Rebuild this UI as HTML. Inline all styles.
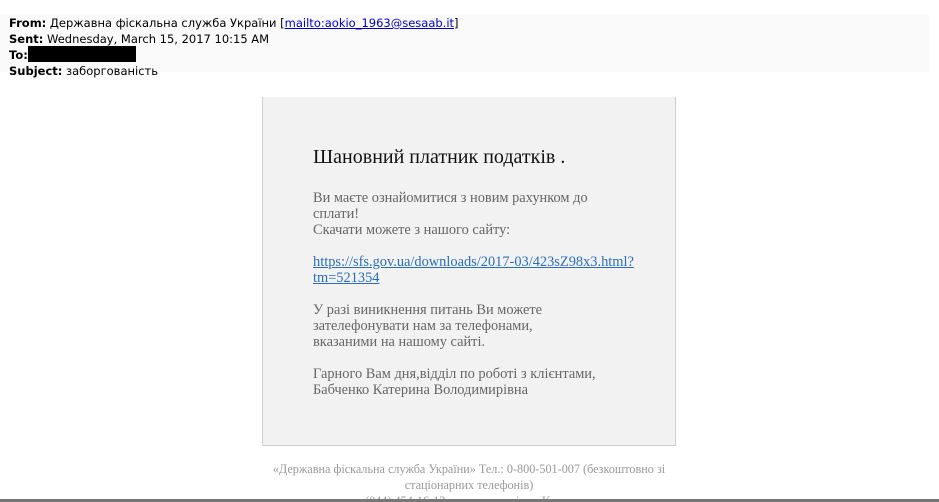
<!DOCTYPE html>
<html><head><meta charset="utf-8"><style>
html,body{margin:0;padding:0;background:#fff;width:939px;height:502px;overflow:hidden;position:relative}
.hdr{position:absolute;left:0;top:14px;width:929px;height:58px;background:#fafafb}
.h{position:absolute;left:9px;font-family:"DejaVu Sans","Liberation Sans",sans-serif;font-size:11.5px;color:#000;line-height:16px;white-space:nowrap}
.h b{font-weight:bold}
.h a{color:#0000cc;text-decoration:underline}
.blk{display:inline-block;width:108px;height:16px;background:#000;vertical-align:top;margin-top:-1px}
.box{position:absolute;left:262px;top:97px;width:412px;height:348px;background:#f2f2f2;border:1px solid #cfcfcf;border-top:none}
.t{position:absolute;left:313px;font-family:"Liberation Serif","DejaVu Serif",serif;font-size:14.4px;color:#666;line-height:16px;white-space:nowrap}
.title{font-size:20px;color:#111;top:149px}
.t a{color:#2a6ebb;text-decoration:underline}
.f{position:absolute;left:262px;width:414px;text-align:center;font-family:"Liberation Serif",serif;font-size:12.2px;color:#999;line-height:16px;top:461px}
.bar{position:absolute;left:0;top:499px;width:939px;height:3px;background:#777}
</style></head><body>
<div class="hdr"></div>
<div class="h" style="top:15px"><b>From:</b> Державна фіскальна служба України [<a>mailto:aokio_1963@sesaab.it</a>]</div>
<div class="h" style="top:31px"><b>Sent:</b> Wednesday, March 15, 2017 10:15 AM</div>
<div class="h" style="top:47px"><b>To:</b><span class="blk"></span></div>
<div class="h" style="top:63px"><b>Subject:</b> заборгованість</div>
<div class="box"></div>
<div class="t title">Шановний платник податків .</div>
<div class="t" style="top:190px">Ви маєте ознайомитися з новим рахунком до<br>сплати!<br>Скачати можете з нашого сайту:</div>
<div class="t" style="top:254px"><a>https://sfs.gov.ua/downloads/2017-03/423sZ98x3.html?</a><br><a>tm=521354</a></div>
<div class="t" style="top:302px">У разі виникнення питань Ви можете<br>зателефонувати нам за телефонами,<br>вказаними на нашому сайті.</div>
<div class="t" style="top:366px">Гарного Вам дня,відділ по роботі з клієнтами,<br>Бабченко Катерина Володимирівна</div>
<div class="f">«Державна фіскальна служба України» Тел.: 0-800-501-007 (безкоштовно зі<br>стаціонарних телефонів)<br>(044) 454-16-13 для мешканців м. Києва</div>
<div class="bar"></div>
</body></html>
